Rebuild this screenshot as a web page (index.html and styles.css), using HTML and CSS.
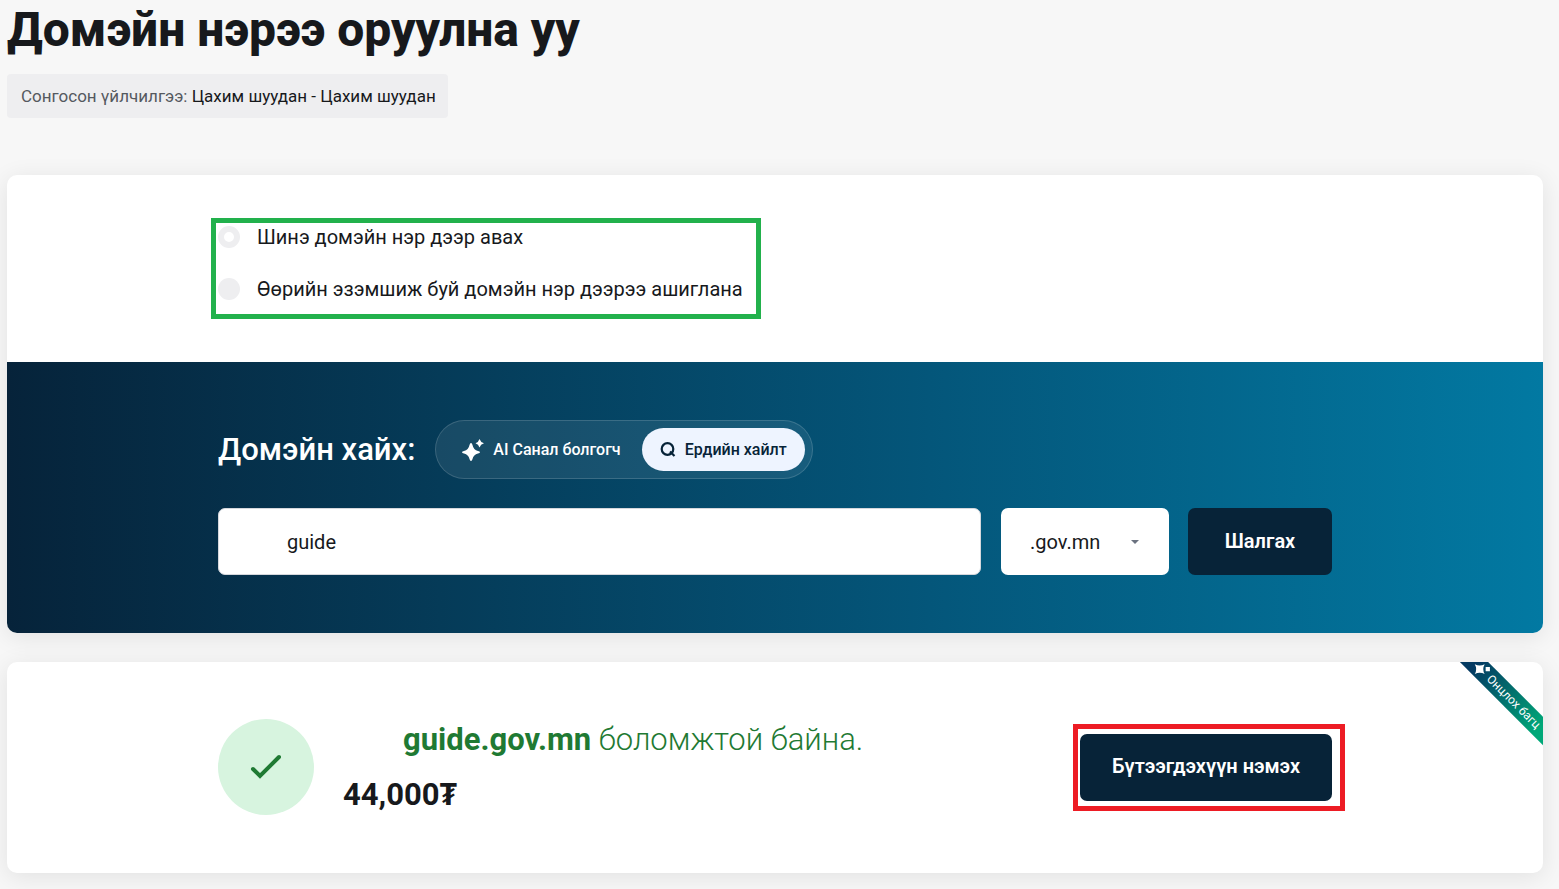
FILE: index.html
```html
<!DOCTYPE html>
<html lang="mn">

<head>
    <meta charset="UTF-8">
    <meta name="viewport" content="width=device-width, initial-scale=1.0">
    <title>Домэйн нэрээ оруулна уу</title>
    <link rel="stylesheet" href="styles.css">
</head>

<body>
    <main class="page">
        <h1 class="page-title">Домэйн нэрээ оруулна уу</h1>
        <p class="service">Сонгосон үйлчилгээ: <span>Цахим шуудан - Цахим шуудан</span></p>

        <section class="card">
            <div class="options">
                <div class="container">
                    <div class="option-list">
                        <label class="option"><input type="radio" name="domain_option" value="new" checked>Шинэ домэйн нэр дээр авах</label>
                        <label class="option"><input type="radio" name="domain_option" value="own">Өөрийн эзэмшиж буй домэйн нэр дээрээ ашиглана</label>
                    </div>
                </div>
            </div>

            <div class="search">
                <div class="container">
                    <div class="search-head">
                        <h2 class="search-title">Домэйн хайх:</h2>
                        <div class="switch">
                            <button type="button" class="switch-btn">
                                <svg class="icon-stars" viewBox="0 0 22 22" fill="currentColor" aria-hidden="true">
                                    <path d="M9 4Q10 4 10.500 6Q11.500 11 16 12Q18 12.500 18 13.300Q18 14 16 14.500Q11.500 15.500 10.500 20Q10 22 9 22Q8 22 7.500 20Q6.500 15.500 2 14.500Q0 14 0 13.300Q0 12.500 2 12Q6.500 11 7.500 6Q8 4 9 4Z"/>
                                    <path d="M17.500 0Q18.500 3.300 22 4.200Q18.500 5.200 17.500 8.500Q16.500 5.200 13.500 4.200Q16.500 3.300 17.500 0Z"/>
                                </svg>
                                AI Санал болгогч
                            </button>
                            <button type="button" class="switch-btn active">
                                <svg class="icon-search" viewBox="0 0 16 16" fill="none" stroke="currentColor" stroke-width="2.200" aria-hidden="true">
                                    <circle cx="7.500" cy="7" r="5.800"/>
                                    <path d="M10 9.500L14.500 14"/>
                                </svg>
                                Ердийн хайлт
                            </button>
                        </div>
                    </div>
                    <form class="search-form" onsubmit="return false">
                        <input type="text" class="search-input" value="guide" aria-label="Домэйн нэр">
                        <div class="select-wrap">
                            <select class="search-select" aria-label="Домэйн өргөтгөл">
                                <option>.gov.mn</option>
                            </select>
                        </div>
                        <button type="submit" class="btn">Шалгах</button>
                    </form>
                </div>
            </div>
        </section>

        <section class="card result">
            <div class="ribbon">
                <svg viewBox="0 0 16 14" fill="currentColor" aria-hidden="true">
                    <path d="M7 1Q8.500 6.500 14 8Q8.500 9.500 7 15Q5.500 9.500 0 8Q5.500 6.500 7 1Z"/>
                    <path d="M12.700 -0.700L15.700 2.300L12.700 5.300L9.700 2.300Z"/>
                </svg>
                Онцлох багц
            </div>
            <div class="container result-row">
                <div class="check">
                    <svg viewBox="0 0 32 26" fill="none" stroke="currentColor" stroke-width="4" stroke-linecap="round" aria-hidden="true">
                        <path d="M3 15L10 22L29 3"/>
                    </svg>
                </div>
                <div class="result-text">
                    <p class="available"><strong>guide.gov.mn</strong> боломжтой байна.</p>
                    <p class="price">44,000₮</p>
                </div>
                <div class="result-action">
                    <button type="button" class="btn">Бүтээгдэхүүн нэмэх</button>
                </div>
            </div>
        </section>
    </main>
</body>

</html>
```
FILE: styles.css
```css
* {
    box-sizing: border-box;
}

body {
    margin: 0;
    background-color: #f7f7f7;
    color: #17191c;
    font-family: Roboto, "Noto Sans", sans-serif;
    font-size: 20px;
}

h1, h2, p {
    margin: 0;
}

button, input, select {
    font-family: inherit;
}

.page {
    padding: 0 16px 16px 7px;
}

.page-title {
    font-size: 48px;
    font-weight: 800;
    line-height: 60px;
}

.service {
    display: inline-block;
    margin-top: 14px;
    padding: 10px 12px 10px 14px;
    border-radius: 4px;
    background-color: #eeeef0;
    color: #55595f;
    font-size: 17px;
    line-height: 24px;
}

.service span {
    color: #17191c;
}

.card {
    position: relative;
    margin-top: 57px;
    border-radius: 10px;
    background-color: #fff;
    box-shadow: 0 4px 24px rgba(0, 0, 0, 0.09);
    overflow: hidden;
}

.container {
    max-width: 1114px;
    margin: 0 auto;
}

.options {
    padding: 50px 0 61px;
}

.option-list {
    position: relative;
    display: flex;
    flex-direction: column;
    align-items: flex-start;
    gap: 28px;
    width: fit-content;
}

/* green frame round the choices */
.option-list::after {
    content: "";
    position: absolute;
    inset: -7px -18px -18px -7px;
    border: 5px solid #22b14c;
    pointer-events: none;
}

.option {
    display: flex;
    align-items: center;
    gap: 17px;
    line-height: 24px;
}

.option input {
    appearance: none;
    width: 22px;
    height: 22px;
    margin: 0;
    border-radius: 50%;
    background-color: #eeeef0;
}

.option input:checked {
    border: 6px solid #eeeef0;
    background-color: #fff;
}

.search {
    padding: 58px 0;
    background: linear-gradient(90deg, #06233a, #04567a 60%, #0279a2);
    color: #fff;
}

.search-head {
    display: flex;
    align-items: center;
    gap: 20px;
}

.search-title {
    font-size: 31px;
    font-weight: 500;
}

.switch {
    display: flex;
    gap: 3px;
    padding: 7px 7px 7px 8px;
    border: 1px solid rgba(255, 255, 255, 0.15);
    border-radius: 30px;
    background-color: rgba(255, 255, 255, 0.08);
}

.switch-btn {
    display: flex;
    align-items: center;
    gap: 9px;
    height: 43px;
    padding: 0 18px;
    border: none;
    border-radius: 22px;
    background: none;
    color: #fff;
    font-size: 16px;
    font-weight: 500;
    cursor: pointer;
}

.switch-btn.active {
    background-color: #eef4ff;
    color: #072338;
}

.icon-stars {
    width: 22px;
    height: 22px;
}

.icon-search {
    width: 16px;
    height: 16px;
}

.search-form {
    display: flex;
    margin-top: 29px;
}

.search-input {
    flex: 1;
    min-width: 0;
    height: 67px;
    padding: 0 68px;
    border: 1px solid #d5d7dc;
    border-radius: 7px;
    background-color: #fff;
    color: #17191c;
    font-size: 20px;
}

.select-wrap {
    position: relative;
    width: 168px;
    margin: 0 19px 0 20px;
}

/* arrow over the select */
.select-wrap::after {
    content: "";
    position: absolute;
    top: 32px;
    right: 30px;
    border: 4px solid transparent;
    border-top-color: #6b7280;
    pointer-events: none;
}

.search-select {
    appearance: none;
    width: 100%;
    height: 67px;
    padding: 0 29px;
    border: none;
    border-radius: 7px;
    background-color: #fff;
    color: #17191c;
    font-size: 20px;
}

.btn {
    height: 67px;
    padding: 0 30px 2px;
    border: none;
    border-radius: 7px;
    background-color: #072338;
    color: #fff;
    font-size: 20px;
    font-weight: 600;
    cursor: pointer;
}

.search-form .btn {
    width: 144px;
}

.result-action .btn {
    min-width: 252px;
}

.result {
    margin-top: 29px;
    padding: 50px 0 51px;
}

.result-row {
    display: flex;
    align-items: center;
}

.check {
    display: flex;
    align-items: center;
    justify-content: center;
    width: 96px;
    height: 96px;
    border-radius: 50%;
    background-color: #d7f4df;
    color: #1f7a33;
}

.check svg {
    width: 32px;
    height: 26px;
}

.result-text {
    flex: 1;
    margin-left: 29px;
    font-size: 31px;
    line-height: 55px;
}

.available {
    padding-left: 60px;
    color: #1f7a33;
    font-weight: 300;
}

.available strong, .price {
    font-weight: 700;
}

.result-action {
    position: relative;
    display: flex;
}

/* red frame round the add button */
.result-action::after {
    content: "";
    position: absolute;
    inset: -10px -13px -10px -7px;
    border: 5px solid #ed1c24;
    pointer-events: none;
}

.ribbon {
    position: absolute;
    top: 24px;
    right: -40px;
    display: flex;
    align-items: center;
    justify-content: center;
    gap: 3px;
    width: 150px;
    height: 20px;
    padding-right: 3px;
    background: linear-gradient(90deg, #043a62 20%, #00a878 80%);
    color: #fff;
    font-size: 12px;
    line-height: 14px;
    transform: rotate(45deg);
}

.ribbon svg {
    width: 16px;
    height: 14px;
    overflow: visible;
}
```
